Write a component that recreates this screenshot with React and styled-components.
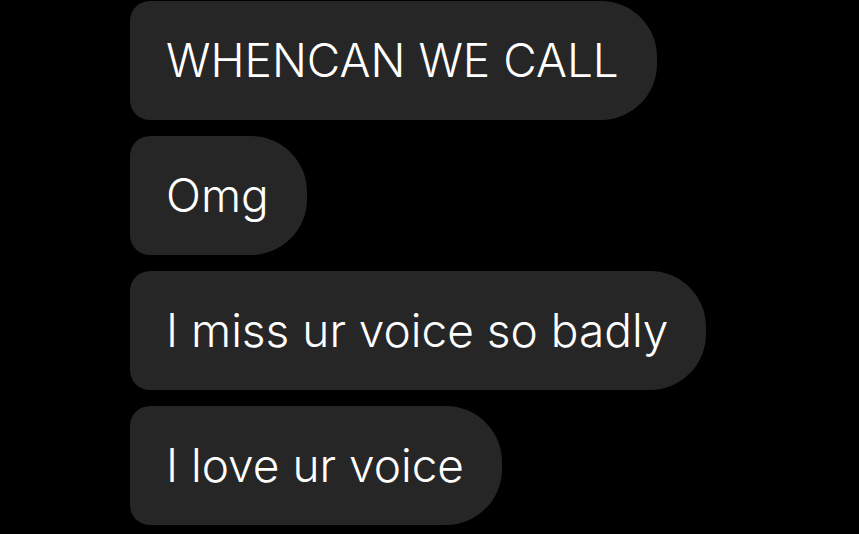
import React from "react";
import styled, { createGlobalStyle } from "styled-components";

const GlobalStyle = createGlobalStyle`
  html, body {
    margin: 0;
    padding: 0;
    background: #000;
  }
  body {
    font-family: Inter, Roboto, "Liberation Sans", Arial, sans-serif;
  }
`;

const Thread = styled.div`
  display: flex;
  flex-direction: column;
  align-items: flex-start;
  gap: 16px;
  padding: 1px 0 0 130px;
  min-height: 534px;
  box-sizing: border-box;
  background: #000;
`;

const Bubble = styled.div`
  display: inline-flex;
  align-items: center;
  height: 119px;
  box-sizing: border-box;
  padding: 0 38px 2px 36px;
  background: #262626;
  color: #fff;
  font-size: 46px;
  font-weight: 300;
  line-height: 1;
  white-space: nowrap;
  border-radius: 20px 56px 56px 20px;
`;

const messages = [
  "WHENCAN WE CALL",
  "Omg",
  "I miss ur voice so badly",
  "I love ur voice",
];

function App() {
  return (
    <>
      <GlobalStyle />
      <Thread>
        {messages.map((text) => (
          <Bubble key={text}>{text}</Bubble>
        ))}
      </Thread>
    </>
  );
}

export default App;
